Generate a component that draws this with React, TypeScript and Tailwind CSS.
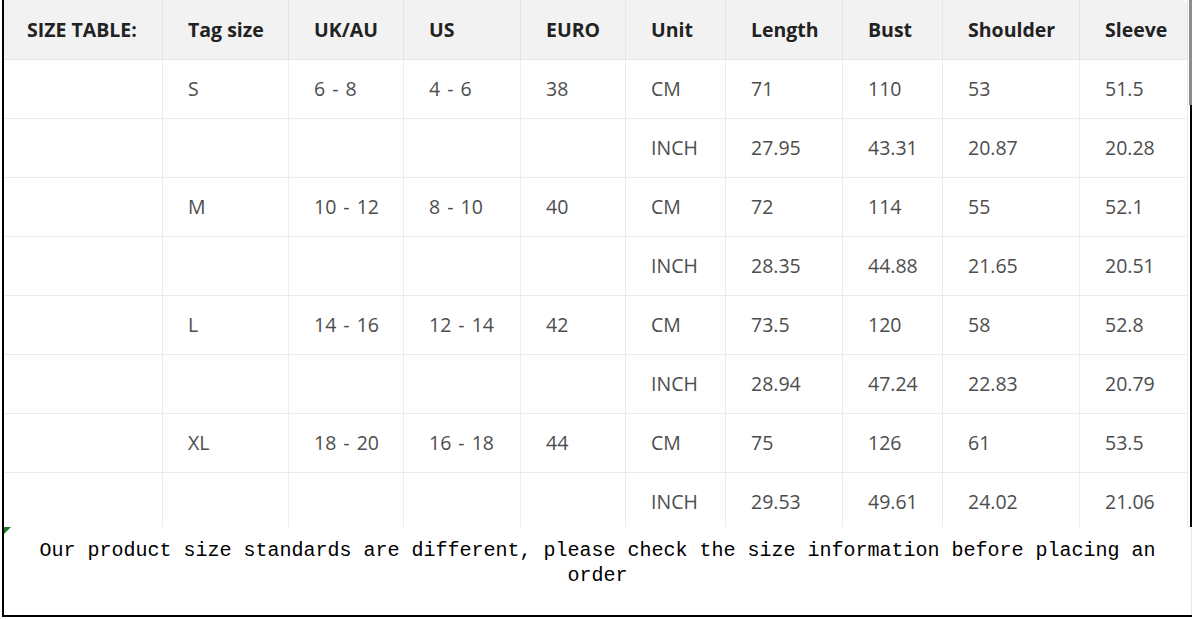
const columns = ["SIZE TABLE:", "Tag size", "UK/AU", "US", "EURO", "Unit", "Length", "Bust", "Shoulder", "Sleeve"];

const rows: string[][] = [
  ["", "S", "6 - 8", "4 - 6", "38", "CM", "71", "110", "53", "51.5"],
  ["", "", "", "", "", "INCH", "27.95", "43.31", "20.87", "20.28"],
  ["", "M", "10 - 12", "8 - 10", "40", "CM", "72", "114", "55", "52.1"],
  ["", "", "", "", "", "INCH", "28.35", "44.88", "21.65", "20.51"],
  ["", "L", "14 - 16", "12 - 14", "42", "CM", "73.5", "120", "58", "52.8"],
  ["", "", "", "", "", "INCH", "28.94", "47.24", "22.83", "20.79"],
  ["", "XL", "18 - 20", "16 - 18", "44", "CM", "75", "126", "61", "53.5"],
  ["", "", "", "", "", "INCH", "29.53", "49.61", "24.02", "21.06"],
];

const grid = "grid grid-cols-[159px_126px_115px_117px_105px_100px_117px_100px_137px_108px]";

export default function App() {
  return (
    <div className="w-[1194px] h-[619px] bg-white overflow-hidden">
      <div className="ml-[2px] w-[1190px] h-[617px] border-l-2 border-b-2 border-black flex flex-col">
        {/* size table */}
        <div className="h-[527px] flex overflow-hidden">
          <div className="w-[1184px] text-[19.5px] font-['Open_Sans','Noto_Sans',sans-serif]">
            <div className={`${grid} h-[60px] bg-[#f2f2f2] rounded-tr-md font-bold text-[#222]`}>
              {columns.map((c, j) => (
                <div
                  key={c}
                  className={`${j === 0 ? "pl-[23px]" : "pl-[25px]"} pt-[1px] flex items-center border-r border-b border-[#e6e6e6]`}
                >
                  {c}
                </div>
              ))}
            </div>
            {rows.map((r, i) => (
              <div key={i} className={`${grid} h-[59px] text-[#4d4d4d]`}>
                {r.map((v, j) => (
                  <div key={j} className="pl-[25px] flex items-center border-r border-b border-[#ececec] [word-spacing:2px]">
                    {v}
                  </div>
                ))}
              </div>
            ))}
          </div>
          {/* scrollbar / right edge */}
          <div className="w-[6px] flex flex-col">
            <div className="h-[105px] w-[4px] ml-[1px] bg-[#8c8c8c]" />
            <div className="flex-1 w-[3px] ml-[2px] bg-black" />
          </div>
        </div>

        {/* note */}
        <div className="relative flex-1 border-r border-[#e8e8e8] pt-[11px] px-[30px] text-center text-[20px] leading-[25px] text-black font-['Liberation_Mono',monospace]">
          <svg className="absolute left-0 top-0" width="7" height="7" viewBox="0 0 7 7">
            <path d="M0 0 L7 0 L0 7 Z" fill="#1f7a2e" />
          </svg>
          Our product size standards are different, please check the size information before placing an order
        </div>
      </div>
    </div>
  );
}
